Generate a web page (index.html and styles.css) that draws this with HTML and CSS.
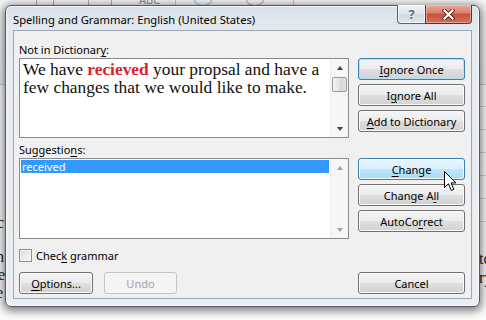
FILE: index.html
```html
<!DOCTYPE html>
<html lang="en">
<head>
    <meta charset="UTF-8">
    <meta name="viewport" content="width=device-width, initial-scale=1.0">
    <title>Spelling and Grammar</title>

    <link rel="stylesheet" href="styles.css">
</head>
<body>
    <div class="desktop">
        <!-- document behind the dialog -->
        <div class="ribbon">
            <span class="rib-icon one"></span>
            <span class="rib-icon two"></span>
            <span class="rib-abc">ABC</span>
            <span class="rib-sep first"></span>
            <span class="rib-icon three"></span>
            <span class="rib-icon four"></span>
            <span class="rib-sep second"></span>
        </div>
        <div class="table-lines"></div>
        <span class="frag l1">c</span>
        <span class="frag l2">h</span>
        <span class="frag l3">ce</span>
        <span class="frag l4">e</span>
        <span class="frag r1">to</span>
        <span class="frag r2">ry</span>

        <div class="window">
            <div class="titlebar">
                <span class="title">Spelling and Grammar: English (United States)</span>
                <div class="caption-buttons">
                    <span class="cap help">?</span>
                    <span class="cap close">
                        <svg width="13" height="11" viewBox="0 0 13 11">
                            <path d="M2.5 1.5 L10.5 9.5 M10.5 1.5 L2.5 9.5" stroke="#5a1d14" stroke-width="4" stroke-linecap="square"/>
                            <path d="M2.5 1.5 L10.5 9.5 M10.5 1.5 L2.5 9.5" stroke="#fff" stroke-width="2.2" stroke-linecap="square"/>
                        </svg>
                    </span>
                </div>
            </div>

            <div class="client">
                <div class="label">Not in Dictionar<u>y</u>:</div>
                <div></div>

                <div class="textbox">
                    <p class="sentence">We have <b class="err">recieved</b> your propsal and have a few changes that we would like to make.</p>
                    <div class="scrollbar">
                        <span class="arrow up"></span>
                        <div class="track"><span class="thumb"></span></div>
                        <span class="arrow down"></span>
                    </div>
                </div>
                <div class="btn-stack">
                    <button class="btn default"><u>I</u>gnore Once</button>
                    <button class="btn">I<u>g</u>nore All</button>
                    <button class="btn"><u>A</u>dd to Dictionary</button>
                </div>

                <div class="label second">Suggestio<u>n</u>s:</div>
                <div></div>

                <div class="listbox">
                    <div class="list-items">
                        <div class="item selected">received</div>
                    </div>
                    <div class="scrollbar disabled">
                        <span class="arrow up"></span>
                        <div class="track"></div>
                        <span class="arrow down"></span>
                    </div>
                </div>
                <div class="btn-stack">
                    <button class="btn hover"><u>C</u>hange</button>
                    <button class="btn">Change A<u>l</u>l</button>
                    <button class="btn">AutoCo<u>r</u>rect</button>
                </div>

                <div class="check-row">
                    <span class="checkbox"></span>
                    <span>Chec<u>k</u> grammar</span>
                </div>
                <div></div>

                <div class="bottom-left">
                    <button class="btn small"><u>O</u>ptions...</button>
                    <button class="btn small undo" disabled>Undo</button>
                </div>
                <div class="bottom-right">
                    <button class="btn">Cancel</button>
                </div>
            </div>
        </div>

        <svg class="cursor" width="13" height="21" viewBox="0 0 13 21">
            <path d="M0.5 0.5 V16.5 L4.5 12.8 L7.3 19.5 L9.8 18.4 L7.1 11.9 H12 Z" fill="#fff" stroke="#000" stroke-width="1" stroke-linejoin="miter"/>
        </svg>
    </div>
</body>
</html>
```

FILE: styles.css
```css
body {
    margin: 0;
    width: 486px;
    height: 320px;
    overflow: hidden;
    background: #fff;
    font-family: "Noto Sans", "Open Sans", sans-serif;
    font-size: 11px;
    color: #000;
}
.desktop {
    position: relative;
    width: 486px;
    height: 320px;
    background: #fbfbfb;
}

/* word document peeking out behind the dialog */
.ribbon {
    position: absolute;
    left: 0;
    top: 0;
    width: 486px;
    height: 84px;
    background: linear-gradient(#f4f5f6, #ecedef);
    border-bottom: 1px solid #c9c9c9;
}
.rib-icon {
    position: absolute;
    top: -6px;
    width: 16px;
    height: 10px;
    border: 1px solid #a7a7a7;
    border-radius: 2px;
}
.rib-icon.one { left: 36px; }
.rib-icon.two { left: 88px; width: 22px; }
.rib-icon.three { left: 194px; border-color: #8fb2d6; border-radius: 50%; }
.rib-icon.four { left: 246px; border-radius: 50%; }
.rib-abc {
    position: absolute;
    left: 139px;
    top: -8px;
    font-size: 11px;
    color: #8a8a8a;
}
.rib-sep {
    position: absolute;
    top: 0;
    width: 1px;
    height: 6px;
    background: #c4c4c4;
}
.rib-sep.first { left: 175px; }
.rib-sep.second { left: 293px; }
.table-lines {
    position: absolute;
    left: 470px;
    top: 84px;
    width: 16px;
    height: 150px;
    background: repeating-linear-gradient(transparent 0 22px, #d4d4d4 22px 23px);
}
.frag {
    position: absolute;
    font-family: "Liberation Serif", serif;
    font-size: 16px;
    line-height: 17px;
    color: #222;
}
.frag.l1 { left: -3px; top: 214px; }
.frag.l2 { left: -4px; top: 248px; }
.frag.l3 { left: -9px; top: 266px; }
.frag.l4 { left: -4px; top: 284px; }
.frag.r1 { left: 479px; top: 250px; }
.frag.r2 { left: 479px; top: 269px; }

/* dialog window */
.window {
    position: absolute;
    left: 5px;
    top: 5px;
    width: 475px;
    height: 302px;
    box-sizing: border-box;
    padding: 0 7px 7px;
    border: 1px solid #4f5863;
    border-radius: 6px;
    background: linear-gradient(#d9e2eb, #e6ebf0 30px, #ebeef1);
    box-shadow: 0 2px 9px 2px rgba(0, 0, 0, 0.5), inset 0 0 0 1px rgba(255, 255, 255, 0.7);
    display: flex;
    flex-direction: column;
}
.titlebar {
    height: 24px;
    display: flex;
    align-items: center;
}
.title {
    font-size: 11.2px;
    line-height: 15px;
    padding-top: 2px;
    color: #000;
}
.caption-buttons {
    margin-left: auto;
    align-self: flex-start;
    margin-top: -1px;
    display: flex;
    height: 19px;
}
.cap {
    box-sizing: border-box;
    height: 19px;
    display: flex;
    align-items: center;
    justify-content: center;
    border: 1px solid #58626e;
    border-top: none;
}
.help {
    width: 28px;
    border-right: none;
    border-radius: 0 0 0 4px;
    background: linear-gradient(#eef2f6, #dde4eb 50%, #cfd8e1 51%, #dfe6ec);
    box-shadow: inset 0 0 0 1px rgba(255, 255, 255, 0.7);
    color: #5f6a76;
    font-size: 13px;
    font-weight: bold;
    text-shadow: 0 0 2px #fff;
}
.close {
    width: 47px;
    border-color: #6b2a20;
    border-radius: 0 0 4px 0;
    background: linear-gradient(#e9a99b, #d9806c 45%, #c7513d 50%, #d2705b 100%);
    box-shadow: inset 0 0 0 1px rgba(255, 220, 210, 0.5);
}

.client {
    flex: 1;
    border: 1px solid #9ba7b4;
    background: #f0f0f0;
    padding: 11px 6px 0 5px;
    display: grid;
    grid-template-columns: 330px 107px;
    column-gap: 9px;
    align-content: start;
}
.label {
    line-height: 15px;
    margin-bottom: 1px;
}
.label.second {
    margin-top: 4px;
}
u {
    text-decoration-thickness: 1px;
    text-underline-offset: 2px;
}

.textbox, .listbox {
    box-sizing: border-box;
    border: 1px solid #878b91;
    background: #fff;
    display: flex;
}
.textbox {
    height: 80px;
}
.listbox {
    height: 81px;
}
.sentence {
    flex: 1;
    margin: 0;
    padding: 1px 0 0 3px;
    font-family: "Liberation Serif", serif;
    font-size: 17.4px;
    line-height: 18px;
    color: #111;
}
.err {
    color: #d8232a;
}
.scrollbar {
    width: 17px;
    display: flex;
    flex-direction: column;
    background: #f6f6f6;
    border-left: 1px solid #ececec;
}
.arrow {
    height: 17px;
    display: flex;
    align-items: center;
    justify-content: center;
}
.arrow::after {
    content: "";
    border-left: 3.5px solid transparent;
    border-right: 3.5px solid transparent;
}
.arrow.up::after {
    border-bottom: 4px solid #444;
}
.arrow.down::after {
    border-top: 4px solid #444;
}
.disabled .arrow.up::after {
    border-bottom-color: #a3a3a3;
}
.disabled .arrow.down::after {
    border-top-color: #a3a3a3;
}
.track {
    flex: 1;
    padding: 1px 1px 0;
}
.thumb {
    display: block;
    height: 15px;
    box-sizing: border-box;
    border: 1px solid #9a9a9a;
    border-radius: 2px;
    background: linear-gradient(90deg, #f3f3f3, #e4e4e4 50%, #d6d6d6 51%, #e2e2e2);
}
.list-items {
    flex: 1;
    padding: 1px;
}
.item {
    height: 13px;
    line-height: 13px;
    padding-left: 1px;
}
.item.selected {
    background: #3399ff;
    color: #fff;
}

.btn-stack {
    display: flex;
    flex-direction: column;
    gap: 4px;
    align-self: start;
}
.btn {
    box-sizing: border-box;
    width: 107px;
    height: 22px;
    padding: 0;
    border: 1px solid #707070;
    border-radius: 3px;
    background: linear-gradient(#f4f4f4, #ececec 50%, #dfdfdf 51%, #d2d2d2);
    box-shadow: inset 0 0 0 1px #fbfbfb;
    font-family: "Noto Sans", "Open Sans", sans-serif;
    font-size: 11px;
    line-height: 19px;
    color: #000;
}
.btn.default {
    border-color: #3c7fb1;
    box-shadow: inset 0 0 0 1px #b5e1f6;
}
.btn.hover {
    border-color: #3c7fb1;
    background: linear-gradient(#eaf6fd, #d9f0fc 50%, #bee6fd 51%, #a9dbf6);
    box-shadow: inset 0 0 0 1px #f3fafe;
}
.btn.small {
    width: 74px;
}
.btn.undo {
    width: 73px;
    border-color: #c2c4c6;
    background: #f4f4f4;
    box-shadow: none;
    color: #a3a3a3;
}

.check-row {
    margin-top: 9px;
    height: 15px;
    line-height: 15px;
    display: flex;
    align-items: center;
    gap: 4px;
}
.checkbox {
    box-sizing: border-box;
    width: 13px;
    height: 13px;
    border: 1px solid #8f8f8f;
    background: linear-gradient(135deg, #d9d9d9, #f9f9f9);
    box-shadow: inset 0 0 0 1px #f3f3f3;
}
.bottom-left {
    margin-top: 9px;
    display: flex;
    gap: 11px;
}
.bottom-right {
    margin-top: 9px;
}

.cursor {
    position: absolute;
    left: 444px;
    top: 171px;
}
```
